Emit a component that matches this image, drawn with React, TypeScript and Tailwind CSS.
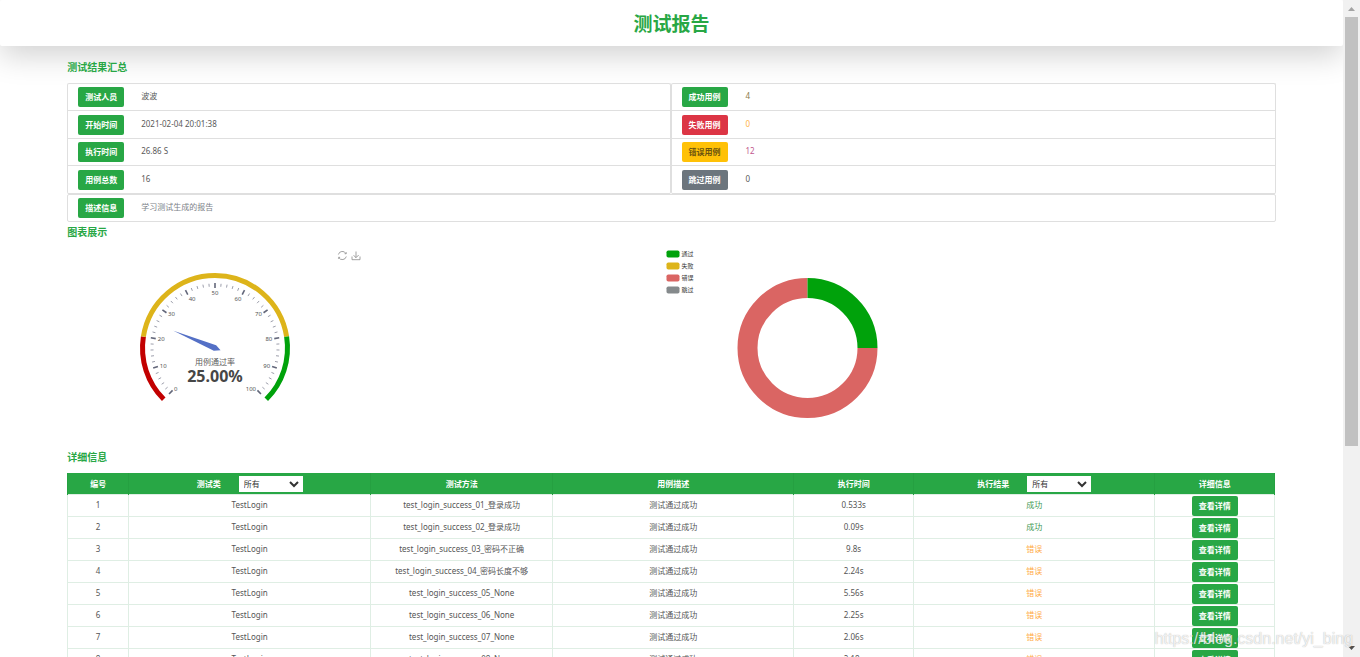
import React from "react";

const GREEN = "#00a20b";
const YELLOW = "#ddb41a";
const RED = "#c20000";
const ROSE = "#da6563";
const GREY = "#858a8c";

function Heading({ className, children }: { className: string; children: React.ReactNode }) {
  return <h2 className={`mb-[10px] text-[10px] leading-3 font-bold text-[#28a745] ${className}`}>{children}</h2>;
}

const badge = "inline-flex h-5 w-[46px] shrink-0 cursor-pointer items-center justify-center rounded-[2px] text-[8px] leading-none font-bold";

type Item = { label: string; value: string; tone: string; text: string };

const leftItems: Item[] = [
  { label: "测试人员", value: "波波", tone: "bg-[#28a745] text-white", text: "text-[#5a5a5a]" },
  { label: "开始时间", value: "2021-02-04 20:01:38", tone: "bg-[#28a745] text-white", text: "text-[#5a5a5a]" },
  { label: "执行时间", value: "26.86 S", tone: "bg-[#28a745] text-white", text: "text-[#5a5a5a]" },
  { label: "用例总数", value: "16", tone: "bg-[#28a745] text-white", text: "text-[#5a5a5a]" },
];

const rightItems: Item[] = [
  { label: "成功用例", value: "4", tone: "bg-[#28a745] text-white", text: "text-[#8a7a48]" },
  { label: "失败用例", value: "0", tone: "bg-[#dc3545] text-white", text: "text-[#ffb347]" },
  { label: "错误用例", value: "12", tone: "bg-[#ffc107] text-[#6b5410]", text: "text-[#c2568e]" },
  { label: "跳过用例", value: "0", tone: "bg-[#6c757d] text-white", text: "text-[#5a5a5a]" },
];

function SummaryRow({ item, gap }: { item: Item; gap: string }) {
  return (
    <li className={`flex h-[27px] items-center border-b border-[#dfdfdf] px-[10px] even:h-7 ${gap}`}>
      <button type="button" className={`${badge} ${item.tone}`}>{item.label}</button>
      <span className={`pb-[2px] text-[8px] leading-3 ${item.text}`}>{item.value}</span>
    </li>
  );
}

function SummaryList({ items, gap }: { items: Item[]; gap: string }) {
  return (
    <ul className="flex flex-col rounded-[2px] border border-b-0 border-[#dfdfdf]">
      {items.map((item) => (
        <SummaryRow key={item.label} item={item} gap={gap} />
      ))}
    </ul>
  );
}

const CX = 148;
const CY = 100;

function polar(radius: number, percent: number) {
  const angle = ((225 - percent * 2.7) * Math.PI) / 180;
  return { x: CX + radius * Math.cos(angle), y: CY - radius * Math.sin(angle), cos: Math.cos(angle), sin: Math.sin(angle) };
}

function arc(from: number, to: number) {
  const a = polar(72.5, from);
  const b = polar(72.5, to);
  const large = (to - from) * 2.7 > 180 ? 1 : 0;
  return `M${a.x} ${a.y}A72.5 72.5 0 ${large} 1 ${b.x} ${b.y}`;
}

function Gauge() {
  const ticks = Array.from({ length: 51 }, (_, i) => i * 2);
  const tip = polar(45, 25);
  const tail = polar(-6, 25);
  const side = { x: tip.sin * 3, y: tip.cos * 3 };
  return (
    <svg width="296" height="200" viewBox="0 0 296 200" role="img" aria-label="用例通过率">
      <g fill="none" strokeWidth="5">
        <path d={arc(0, 20)} stroke={RED} />
        <path d={arc(20, 80)} stroke={YELLOW} />
        <path d={arc(80, 100)} stroke={GREEN} />
      </g>
      {ticks.map((t) => {
        const major = t % 10 === 0;
        const a = polar(major ? 65 : 64.5, t);
        const b = polar(major ? 60 : 61.5, t);
        return (
          <line key={t} x1={a.x} y1={a.y} x2={b.x} y2={b.y} stroke="#63677a" strokeWidth={major ? 1.6 : 0.8} strokeOpacity={major ? 1 : 0.8} />
        );
      })}
      <g fontSize="6" fill="#555">
        {Array.from({ length: 11 }, (_, i) => i * 10).map((v) => {
          const p = polar(58, v);
          const anchor = p.cos < -0.4 ? "start" : p.cos > 0.4 ? "end" : "middle";
          const dy = p.sin > 0.8 ? 5 : 2;
          return (
            <text key={v} x={p.x} y={p.y + dy} textAnchor={anchor}>{v}</text>
          );
        })}
      </g>
      <path
        fill="#5470c6"
        d={`M${tip.x} ${tip.y}L${CX + side.x} ${CY + side.y}L${tail.x} ${tail.y}L${CX - side.x} ${CY - side.y}Z`}
      />
      <text x={CX} y="117" textAnchor="middle" fontSize="8" fill="#5c5c5c">用例通过率</text>
      <text x={CX} y="134" textAnchor="middle" fontSize="16" fontWeight="700" fill="#464646">25.00%</text>
      <g fill="none" stroke="#8a8a8a" strokeWidth="0.8">
        <path d="M271.4 6.5A4.1 4.1 0 0 1 279 5.6M279.3 8.5A4.1 4.1 0 0 1 271.8 9.6" />
        <path d="M277.6 5.7L279.1 5.8L279.4 4.3M273.1 9.4L271.7 9.3L271.4 10.8" />
        <path d="M289 3.5V9.5M286.3 7L289 9.7L291.7 7M285 8.5V11.7H293V8.5" />
      </g>
    </svg>
  );
}

const legend = [
  { name: "通过", color: GREEN },
  { name: "失败", color: YELLOW },
  { name: "错误", color: ROSE },
  { name: "跳过", color: GREY },
];

function Donut() {
  return (
    <svg width="296" height="200" viewBox="0 0 296 200" role="img" aria-label="用例结果分布">
      {legend.map((l, i) => (
        <g key={l.name}>
          <rect x="5.5" y={2.5 + i * 12} width="13" height="7" rx="1.8" fill={l.color} />
          <text x="20.5" y={7.5 + i * 12} fontSize="6" fill="#333">{l.name}</text>
        </g>
      ))}
      <g fill="none" strokeWidth="20">
        <path d="M206.5 100A60 60 0 1 1 146.5 40" stroke={ROSE} />
        <path d="M146.5 40A60 60 0 0 1 206.5 100" stroke={GREEN} />
      </g>
    </svg>
  );
}

const rows = [
  { method: "test_login_success_01_登录成功", time: "0.533s", ok: true },
  { method: "test_login_success_02_登录成功", time: "0.09s", ok: true },
  { method: "test_login_success_03_密码不正确", time: "9.8s", ok: false },
  { method: "test_login_success_04_密码长度不够", time: "2.24s", ok: false },
  { method: "test_login_success_05_None", time: "5.56s", ok: false },
  { method: "test_login_success_06_None", time: "2.25s", ok: false },
  { method: "test_login_success_07_None", time: "2.06s", ok: false },
  { method: "test_login_success_08_None", time: "2.18s", ok: false },
];

const th = "border-x border-[#25a041] p-0 pt-px font-bold";
const td = "border border-[#dfeee4] p-0";

function Filter({ label }: { label: string }) {
  return (
    <select aria-label={label} className="ml-[18px] h-4 w-16 border border-white bg-white text-[8px] font-normal text-[#333]">
      <option>所有</option>
    </select>
  );
}

function DetailTable() {
  return (
    <table className="w-full table-fixed border-collapse text-center text-[8px] leading-3 text-[#555]">
      <colgroup>
        <col className="w-[61px]" />
        <col className="w-[242px]" />
        <col className="w-[182px]" />
        <col className="w-[241px]" />
        <col className="w-[120px]" />
        <col className="w-[241px]" />
        <col className="w-[120px]" />
      </colgroup>
      <thead>
        <tr className="h-[21px] bg-[#28a745] text-white">
          <th className={th}>编号</th>
          <th className={th}>
            <div className="flex items-center justify-center">测试类<Filter label="测试类" /></div>
          </th>
          <th className={th}>测试方法</th>
          <th className={th}>用例描述</th>
          <th className={th}>执行时间</th>
          <th className={th}>
            <div className="flex items-center justify-center">执行结果<Filter label="执行结果" /></div>
          </th>
          <th className={th}>详细信息</th>
        </tr>
      </thead>
      <tbody>
        {rows.map((r, i) => (
          <tr key={r.method} className="h-[22px]">
            <td className={td}>{i + 1}</td>
            <td className={td}>TestLogin</td>
            <td className={td}>{r.method}</td>
            <td className={td}>测试通过成功</td>
            <td className={td}>{r.time}</td>
            <td className={`${td} ${r.ok ? "text-[#3f9a52]" : "text-[#ffab45]"}`}>{r.ok ? "成功" : "错误"}</td>
            <td className={td}>
              <div className="flex justify-center pt-px">
                <button type="button" className={`${badge} bg-[#28a745] text-white`}>查看详情</button>
              </div>
            </td>
          </tr>
        ))}
      </tbody>
    </table>
  );
}

export default function App() {
  return (
    <div className="relative flex h-screen overflow-hidden bg-white font-['Noto_Sans','Noto_Sans_CJK_SC',sans-serif]">
      <div className="min-w-0 flex-1 overflow-hidden">
        <header className="flex h-[46px] items-center justify-center rounded-[2px] bg-white pt-px shadow-[0_10px_30px_rgba(0,0,0,0.175)]">
          <h1 className="text-[19px] leading-6 font-bold text-[#28a745]">测试报告</h1>
        </header>
        <main className="mx-auto w-[90%]">
          <Heading className="pt-[15px]">测试结果汇总</Heading>
          <section>
            <div className="grid grid-cols-[calc(50%-1px)_1fr]">
              <SummaryList items={leftItems} gap="gap-[17px]" />
              <SummaryList items={rightItems} gap="gap-[18px]" />
            </div>
            <div className="flex h-7 items-center gap-[17px] rounded-[2px] border border-[#dfdfdf] px-[10px]">
              <button type="button" className={`${badge} bg-[#28a745] text-white`}>描述信息</button>
              <span className="pb-[2px] text-[8px] leading-3 text-[#7d8288]">学习测试生成的报告</span>
            </div>
          </section>
          <Heading className="pt-1">图表展示</Heading>
          <section className="grid h-[200px] grid-cols-[calc(50%-11px)_1fr]">
            <Gauge />
            <Donut />
          </section>
          <Heading className="pt-[3px]">详细信息</Heading>
          <div className="pr-px">
            <DetailTable />
          </div>
        </main>
      </div>
      <div className="flex w-[17px] flex-col items-center bg-[#f1f1f1]" aria-hidden="true">
        <svg width="17" height="17" viewBox="0 0 17 17" className="shrink-0"><path d="M5 11L8.5 7L12 11Z" fill="#a3a3a3" /></svg>
        <div className="h-[429px] w-[13px] bg-[#c1c1c1]" />
        <svg width="17" height="17" viewBox="0 0 17 17" className="mt-auto shrink-0"><path d="M5 6L12 6L8.5 10Z" fill="#505050" /></svg>
      </div>
      <span className="pointer-events-none absolute right-[7px] bottom-2 font-['Liberation_Sans',sans-serif] text-[16px] leading-5 text-white/80 [text-shadow:0_0_1px_rgba(0,0,0,0.35)]">
        https://blog.csdn.net/yi_bing
      </span>
    </div>
  );
}
